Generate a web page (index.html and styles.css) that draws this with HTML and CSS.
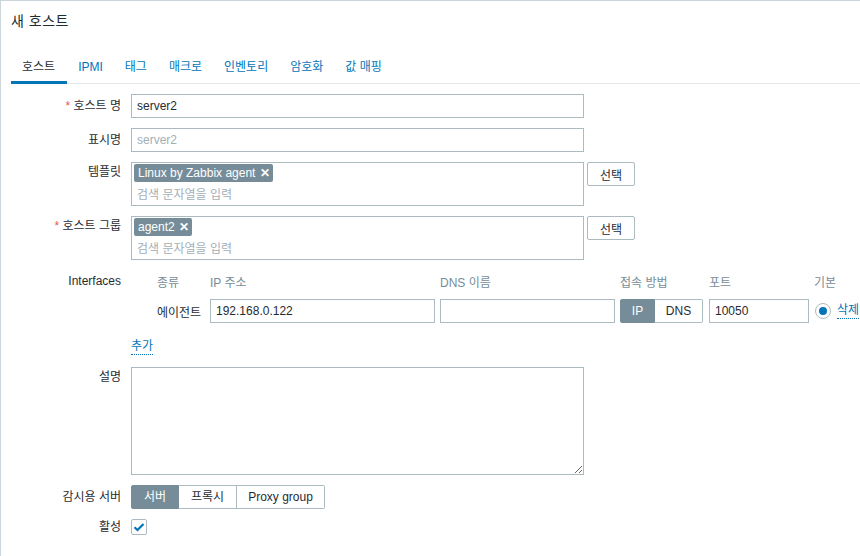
FILE: index.html
```html
<!DOCTYPE html>
<html lang="ko">
<head>
<meta charset="utf-8">
<title>새 호스트</title>
<link rel="stylesheet" href="styles.css">
</head>
<body>
<div class="dialog">
  <div class="dlg-header"><h4>새 호스트</h4></div>
  <ul class="tabs">
    <li class="tab active">호스트</li>
    <li class="tab">IPMI</li>
    <li class="tab">태그</li>
    <li class="tab">매크로</li>
    <li class="tab">인벤토리</li>
    <li class="tab">암호화</li>
    <li class="tab">값 매핑</li>
  </ul>
  <form class="form">
    <div class="row">
      <label class="lbl"><span class="req">*</span> 호스트 명</label>
      <input class="txt" type="text" value="server2">
    </div>
    <div class="row">
      <label class="lbl">표시명</label>
      <input class="txt" type="text" placeholder="server2">
    </div>
    <div class="row">
      <label class="lbl lbl-ms">템플릿</label>
      <div class="ms">
        <div class="ms-tags"><span class="tag">Linux by Zabbix agent <span class="x">✕</span></span></div>
        <div class="ms-ph">검색 문자열을 입력</div>
      </div>
      <button type="button" class="btn">선택</button>
    </div>
    <div class="row">
      <label class="lbl lbl-ms"><span class="req">*</span> 호스트 그룹</label>
      <div class="ms">
        <div class="ms-tags"><span class="tag">agent2 <span class="x">✕</span></span></div>
        <div class="ms-ph">검색 문자열을 입력</div>
      </div>
      <button type="button" class="btn">선택</button>
    </div>
    <div class="row row-if">
      <label class="lbl lbl-if">Interfaces</label>
      <div class="ifaces">
        <div class="if-head">
          <span></span>
          <span>종류</span>
          <span>IP 주소</span>
          <span>DNS 이름</span>
          <span>접속 방법</span>
          <span>포트</span>
          <span class="span2">기본</span>
        </div>
        <div class="if-row">
          <span></span>
          <span class="if-type">에이전트</span>
          <input class="txt if-ip" type="text" value="192.168.0.122">
          <input class="txt if-dns" type="text" value="">
          <div class="seg seg-if"><span class="seg-item on">IP</span><span class="seg-item">DNS</span></div>
          <input class="txt if-port" type="text" value="10050">
          <span class="radio"><span class="dot"></span></span>
          <a class="link">삭제</a>
        </div>
      </div>
    </div>
    <div class="row row-add">
      <span class="lbl"></span>
      <a class="link">추가</a>
    </div>
    <div class="row">
      <label class="lbl lbl-ta">설명</label>
      <textarea class="ta"></textarea>
    </div>
    <div class="row">
      <label class="lbl">감시용 서버</label>
      <div class="seg seg-mon"><span class="seg-item on">서버</span><span class="seg-item">프록시</span><span class="seg-item">Proxy group</span></div>
    </div>
    <div class="row row-chk">
      <label class="lbl lbl-chk">활성</label>
      <span class="chk"><svg width="12" height="10" viewBox="0 0 12 10"><path d="M1.5 5.2 L4.5 8 L10.5 2" fill="none" stroke="#0275b8" stroke-width="2.2"/></svg></span>
    </div>
  </form>
</div>
</body>
</html>
```

FILE: styles.css
```css
* { box-sizing: border-box; }
html, body { margin: 0; padding: 0; background: #fff; }
body {
  font-family: "Liberation Sans", Arial, "Noto Sans CJK KR", sans-serif;
  font-size: 12px;
  color: #1f2c33;
}
.dialog {
  width: 860px;
  height: 556px;
  border-left: 1px solid #ccd5d9;
  border-top: 1px solid #ccd5d9;
  overflow: hidden;
}
.dlg-header { padding: 11px 10px 0; height: 51px; }
.dlg-header h4 {
  margin: 0;
  font-size: 14px;
  line-height: 18px;
  font-weight: normal;
  color: #1f2c33;
  letter-spacing: 0.5px;
}
.tabs {
  list-style: none;
  margin: 0 0 0 10px;
  padding: 0;
  display: flex;
  border-bottom: 1px solid #e6eaec;
  height: 32px;
}
.tab {
  padding: 7px 11px 0;
  line-height: 16px;
  color: #0275b8;
  height: 32px;
  margin-bottom: -1px;
  border-bottom: 3px solid transparent;
}
.tab.active {
  color: #1f2c33;
  border-bottom-color: #0275b8;
  padding: 7px 12px 0 11px;
}
.form { padding-top: 10px; }
.row {
  display: flex;
  align-items: flex-start;
  margin-bottom: 10px;
}
.lbl {
  width: 120px;
  flex: none;
  text-align: right;
  margin-right: 10px;
  line-height: 24px;
  color: #1f2c33;
}
.lbl-ms { line-height: 21px; }
.lbl-ta { line-height: 20px; }
.req { color: #e45959; }
.txt {
  width: 453px;
  height: 24px;
  border: 1px solid #acbbc2;
  border-radius: 0;
  padding: 0 5px;
  font: inherit;
  color: #1f2c33;
  background: #fff;
  outline: none;
}
.txt::placeholder { color: #a3afb5; }
.ms {
  width: 453px;
  height: 44px;
  border: 1px solid #acbbc2;
  padding: 1px 2px;
}
.ms-tags { height: 19px; display: flex; }
.tag {
  display: inline-block;
  background: #768d99;
  color: #fff;
  height: 18px;
  line-height: 18px;
  padding: 0 3px 0 4px;
  border-radius: 2px;
}
.tag .x { font-weight: bold; margin-left: 1px; font-size: 12px; }
.ms-ph { color: #a3afb5; line-height: 20px; padding: 2px 0 0 3px; }
.btn {
  margin-left: 3px;
  width: 48px;
  height: 24px;
  border: 1px solid #acbbc2;
  border-radius: 2px;
  background: #fff;
  font: inherit;
  color: #1f2c33;
  padding: 0;
}
.row-if { margin-bottom: 0; }
.lbl-if { line-height: 22px; }
.ifaces { flex: none; }
.if-head, .if-row {
  display: grid;
  grid-template-columns: 21px 48px 225px 175px 84px 100px 18px auto;
  column-gap: 5px;
  align-items: center;
}
.if-head { height: 22px; color: #768d99; margin-bottom: 7px; }
.if-head .span2 { grid-column: span 2; }
.if-row { height: 24px; }
.if-type { color: #1f2c33; }
.txt.if-ip, .txt.if-dns, .txt.if-port { width: 100%; }
.seg { display: flex; height: 24px; }
.seg-item {
  height: 24px;
  line-height: 22px;
  padding: 0 11px;
  border: 1px solid #acbbc2;
  border-left: none;
  background: #fff;
  color: #1f2c33;
  text-align: center;
}
.seg-item:first-child { border-left: 1px solid #acbbc2; border-radius: 2px 0 0 2px; }
.seg-item:last-child { border-radius: 0 2px 2px 0; }
.seg-item.on { background: #768d99; border-color: #768d99; color: #fff; }
.seg-if .seg-item:first-child { width: 35px; padding: 0; }
.seg-if .seg-item:last-child { width: 48px; padding: 0; }
.seg-mon .seg-item { padding: 0; }
.seg-mon .seg-item:nth-child(1) { width: 48px; }
.seg-mon .seg-item:nth-child(2) { width: 58px; }
.seg-mon .seg-item:nth-child(3) { width: 88px; }
.radio {
  width: 16px;
  height: 16px;
  border: 1px solid #acbbc2;
  border-radius: 50%;
  display: flex;
  align-items: center;
  justify-content: center;
  margin-left: 1px;
}
.dot { width: 8px; height: 8px; border-radius: 50%; background: #0275b8; }
.link {
  color: #0275b8;
  border-bottom: 1px dotted #0275b8;
  line-height: 15px;
  cursor: pointer;
}
.row-add { margin-top: 16px; margin-bottom: 12px; align-items: center; }
.row-add .lbl { height: 16px; }
.ta {
  width: 453px;
  height: 108px;
  border: 1px solid #acbbc2;
  border-radius: 0;
  font: inherit;
  resize: both;
  margin: 0;
  outline: none;
}
.row-chk { margin-top: 7px; }
.lbl-chk { line-height: 16px; }
.chk {
  width: 16px;
  height: 16px;
  border: 1px solid #acbbc2;
  border-radius: 2px;
  display: flex;
  align-items: center;
  justify-content: center;
}
```
